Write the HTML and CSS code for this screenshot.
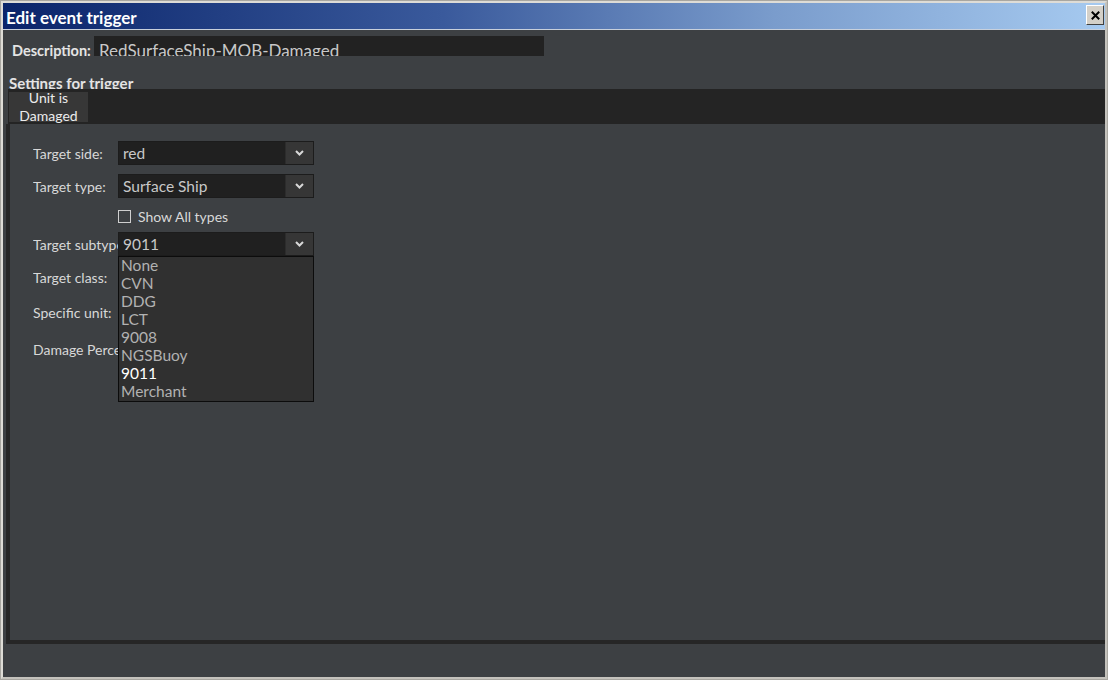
FILE: index.html
```html
<!DOCTYPE html>
<html>
<head>
<meta charset="utf-8">
<link rel="stylesheet" href="styles.css">
</head>
<body>
<div class="window">
  <div class="titlebar">
    <span class="title">Edit event trigger</span>
    <div class="close"><svg width="9" height="9" viewBox="0 0 9 9"><path d="M0.8 0.8 L8.2 8.2 M8.2 0.8 L0.8 8.2" stroke="#000" stroke-width="2"/></svg></div>
  </div>
  <div class="body">
    <div class="desc-row">
      <span class="desc-label">Description:</span>
      <div class="desc-input">RedSurfaceShip-MOB-Damaged</div>
    </div>
    <div class="settings-title">Settings for trigger</div>
    <div class="tabbar">
      <div class="tab"><div class="tab-text">Unit is<br>Damaged</div></div>
    </div>
    <div class="panel">
      <div class="row r1">
        <span class="label">Target side:</span>
        <div class="select"><span class="value">red</span><span class="arrow"><svg width="9" height="6" viewBox="0 0 9 6"><polyline points="1,1 4.5,4.5 8,1" fill="none" stroke="#d8d8d8" stroke-width="2"/></svg></span></div>
      </div>
      <div class="row r2">
        <span class="label">Target type:</span>
        <div class="select"><span class="value">Surface Ship</span><span class="arrow"><svg width="9" height="6" viewBox="0 0 9 6"><polyline points="1,1 4.5,4.5 8,1" fill="none" stroke="#d8d8d8" stroke-width="2"/></svg></span></div>
      </div>
      <div class="row r3">
        <span class="label"></span>
        <span class="checkbox"></span><span class="check-text">Show All types</span>
      </div>
      <div class="row r4">
        <span class="label">Target subtype:</span>
        <div class="select open"><span class="value">9011</span><span class="arrow"><svg width="9" height="6" viewBox="0 0 9 6"><polyline points="1,1 4.5,4.5 8,1" fill="none" stroke="#d8d8d8" stroke-width="2"/></svg></span>
          <ul class="dropdown">
            <li>None</li>
            <li>CVN</li>
            <li>DDG</li>
            <li>LCT</li>
            <li>9008</li>
            <li>NGSBuoy</li>
            <li class="selected">9011</li>
            <li>Merchant</li>
          </ul>
        </div>
      </div>
      <div class="row r5">
        <span class="label">Target class:</span>
      </div>
      <div class="row r6">
        <span class="label">Specific unit:</span>
      </div>
      <div class="row r7">
        <span class="label">Damage Percent:</span>
      </div>
    </div>
    <div class="footer"></div>
  </div>
</div>
</body>
</html>
```

FILE: styles.css
```css
html, body {
  margin: 0;
  padding: 0;
  background: #3d4043;
}

.window {
  width: 1108px;
  height: 680px;
  box-sizing: border-box;
  border: 3px solid #dedcd6;
  border-right-color: #c4c2bc;
  border-bottom-color: #c4c2bc;
  outline: 1px solid #a8a6a0;
  outline-offset: -1px;
  display: flex;
  flex-direction: column;
  font-family: Lato, "Liberation Sans", sans-serif;
  background: #3d4043;
  overflow: hidden;
}

.titlebar {
  height: 26px;
  flex: none;
  display: flex;
  align-items: flex-start;
  background: linear-gradient(to right, #0a246a 0%, #3a5a9c 40%, #7a9ccc 70%, #a6caf0 100%);
  border-bottom: 1px solid #c8d0dc;
}

.title {
  flex: 1;
  padding: 3px 0 0 3px;
  line-height: 24px;
  font-size: 17px;
  font-weight: bold;
  color: #ffffff;
}

.close {
  width: 18px;
  height: 20px;
  margin: 2px 1px 0 0;
  box-sizing: border-box;
  background: #d4d0c8;
  border: 1px solid;
  border-color: #ffffff #404040 #404040 #ffffff;
  display: flex;
  align-items: center;
  justify-content: center;
}

.body {
  flex: 1;
  display: flex;
  flex-direction: column;
  background: #3d4043;
}

.desc-row {
  display: flex;
  margin-top: 6px;
  height: 20px;
  flex: none;
}

.desc-label {
  width: 82px;
  flex: none;
  padding: 6px 0 0 9px;
  line-height: 18px;
  font-size: 14.5px;
  font-weight: bold;
  color: #e4e4e4;
  white-space: nowrap;
}

.desc-input {
  width: 450px;
  height: 20px;
  box-sizing: border-box;
  padding: 5px 0 0 5px;
  line-height: 20px;
  font-size: 17px;
  color: #c8c8c8;
  background: #222222;
  overflow: hidden;
  white-space: nowrap;
}

.settings-title {
  flex: none;
  margin-top: 19px;
  padding: 1px 0 0 6px;
  height: 13px;
  line-height: 14px;
  font-size: 15px;
  font-weight: bold;
  color: #e4e4e4;
  overflow: hidden;
  white-space: nowrap;
}

.tabbar {
  flex: none;
  height: 35px;
  margin-left: 5px;
  background: #242424;
  display: flex;
}

.tab {
  width: 79px;
  height: 30px;
  margin: 3px 0 0 1px;
  background: #373737;
  text-align: center;
  font-size: 14px;
  line-height: 18px;
  color: #ececec;
}

.tab-text {
  margin-top: -3px;
}

.panel {
  flex: none;
  height: 520px;
  box-sizing: border-box;
  margin-left: 3px;
  border-left: 4px solid #262626;
  border-bottom: 4px solid #262626;
  padding: 17px 0 0 23px;
  display: flex;
  flex-direction: column;
}

.footer {
  flex: 1;
}

.row {
  display: flex;
  align-items: center;
  height: 24px;
  flex: none;
}

.r2 { margin-top: 9px; }
.r3 { margin-top: 8px; height: 21px; }
.r4 { margin-top: 5px; }
.r5 { margin-top: 9px; }
.r6 { margin-top: 11px; }
.r7 { margin-top: 13px; }

.label {
  width: 85px;
  flex: none;
  font-size: 14px;
  color: #d8d8d8;
  white-space: nowrap;
  overflow: hidden;
}

.select {
  position: relative;
  width: 196px;
  height: 24px;
  box-sizing: border-box;
  border: 1px solid #1c1c1c;
  background: #202020;
  display: flex;
  align-items: center;
}

.value {
  flex: 1;
  padding-left: 4px;
  font-size: 15.5px;
  color: #c8c8c8;
}

.arrow {
  width: 28px;
  height: 22px;
  box-sizing: border-box;
  background: #363636;
  border-left: 1px solid #2c2c2c;
  display: flex;
  align-items: center;
  justify-content: center;
}

.checkbox {
  width: 13px;
  height: 13px;
  box-sizing: border-box;
  border: 1px solid #cfcfcf;
  flex: none;
}

.check-text {
  margin-left: 7px;
  font-size: 14px;
  color: #d8d8d8;
}

.dropdown {
  position: absolute;
  top: 23px;
  left: -1px;
  width: 196px;
  height: 146px;
  box-sizing: border-box;
  margin: 0;
  padding: 0;
  list-style: none;
  background: #303030;
  border: 1px solid #0c0c0c;
  z-index: 5;
}

.dropdown li {
  height: 18px;
  line-height: 17px;
  padding-left: 2px;
  font-size: 15.5px;
  color: #b2b2b2;
}

.dropdown li.selected {
  color: #ffffff;
}
```
